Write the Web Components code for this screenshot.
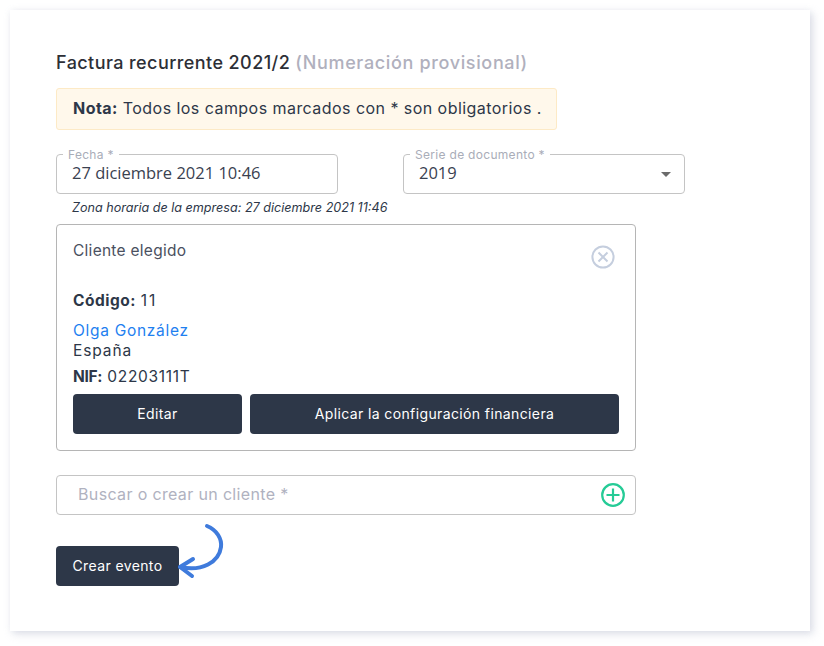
<!DOCTYPE html>
<html lang="es">
<head>
<meta charset="utf-8">
<title>Factura recurrente</title>
<style>
  html,body{margin:0;padding:0;background:#fff}
  body{font-family:Inter,"Liberation Sans",sans-serif;color:#2d3748;width:824px;height:646px;overflow:hidden}
</style>
</head>
<body>
<invoice-page>
  <form-title main="Factura recurrente 2021/2" extra="(Numeración provisional)"></form-title>
  <note-box><b>Nota:</b> Todos los campos marcados con * son obligatorios .</note-box>
  <field-row>
    <outline-field label="Fecha *" value="27 diciembre 2021 10:46"></outline-field>
    <outline-field label="Serie de documento *" value="2019" select></outline-field>
  </field-row>
  <hint-line>Zona horaria de la empresa: 27 diciembre 2021 11:46</hint-line>
  <client-card></client-card>
  <search-field placeholder="Buscar o crear un cliente *"></search-field>
  <event-action></event-action>
</invoice-page>

<script>
// each element keeps its own markup and styles in the shadow root
class InvoicePage extends HTMLElement {
  constructor(){
    super();
    this.attachShadow({mode:'open'});
    this.shadowRoot.innerHTML = `
      <style>
        :host{display:block;box-sizing:border-box;width:800px;height:621px;margin:10px 0 0 10px;padding:41px 46px 0;background:#fff;box-shadow:3px 3px 8px rgba(180,185,205,.45),0 0 6px rgba(210,215,225,.2)}
      </style>
      <slot></slot>
    `;
  }
}
class FieldRow extends HTMLElement {
  constructor(){
    super();
    this.attachShadow({mode:'open'});
    this.shadowRoot.innerHTML = `
      <style>:host{display:flex;gap:65px}</style>
      <slot></slot>
    `;
  }
}
class FormTitle extends HTMLElement {
  constructor(){
    super();
    this.attachShadow({mode:'open'});
    this.shadowRoot.innerHTML = `
      <style>
        :host{display:block;height:24px;line-height:24px;font-size:18px;font-weight:500;color:#2d2f36;white-space:nowrap;letter-spacing:.42px}
        span{color:#b0b0bd;letter-spacing:.65px}
      </style>
      <div id="m"></div>
    `;
  }
  connectedCallback(){
    const el = this.shadowRoot.getElementById('m');
    el.textContent = this.getAttribute('main')+' ';
    const s = document.createElement('span');
    s.textContent = this.getAttribute('extra');
    el.appendChild(s);
  }
}
class NoteBox extends HTMLElement {
  constructor(){
    super();
    this.attachShadow({mode:'open'});
    this.shadowRoot.innerHTML = `
      <style>
        :host{display:block;box-sizing:border-box;width:501px;height:42px;margin:13px 0 24px;padding:0 16px;line-height:38px;font-size:16px;letter-spacing:.45px;color:#2d3748;background:#fff8eb;border:1px solid #fdeac6;border-radius:3px;white-space:nowrap}
        ::slotted(b){font-weight:700}
      </style>
      <slot></slot>
    `;
  }
}
class OutlineField extends HTMLElement {
  constructor(){
    super();
    this.attachShadow({mode:'open'});
    this.shadowRoot.innerHTML = `
      <style>
        :host{display:block;position:relative;box-sizing:border-box;width:282px;height:40px;border:1px solid #c4c4c4;border-radius:4px;background:#fff}
        .val{display:flex;align-items:center;justify-content:space-between;height:35px;padding:0 15px;font-family:"Open Sans",sans-serif;font-size:16.5px;color:#3a4150}
        label{position:absolute;left:6px;top:-7px;padding:0 5px;background:#fff;font-size:12px;line-height:13px;letter-spacing:.3px;color:#a9adb8;white-space:nowrap}
        svg{display:none;margin:3px -2px 0 0}
        :host([select]) svg{display:block}
      </style>
      <label></label>
      <div class="val"><span></span>
        <svg width="10" height="5" viewBox="0 0 10 5"><path d="M0 0h10L5 5z" fill="#6b6b6b"/></svg>
      </div>
    `;
  }
  connectedCallback(){
    this.shadowRoot.querySelector('label').textContent = this.getAttribute('label');
    this.shadowRoot.querySelector('span').textContent = this.getAttribute('value');
  }
}
class HintLine extends HTMLElement {
  constructor(){
    super();
    this.attachShadow({mode:'open'});
    this.shadowRoot.innerHTML = `
      <style>
        :host{display:block;height:16px;margin:6px 0 8px 16px;line-height:16px;font-size:12.6px;font-style:italic;color:#2d3748;white-space:nowrap}
      </style>
      <slot></slot>
    `;
  }
}
class ClientCard extends HTMLElement {
  constructor(){
    super();
    this.attachShadow({mode:'open'});
    this.shadowRoot.innerHTML = `
      <style>
        :host{display:block;box-sizing:border-box;width:580px;height:227px;padding:15px 16px 0;border:1px solid #b5b5b5;border-radius:4px;font-size:15.5px;letter-spacing:.4px;color:#2d3748}
        .head{display:flex;justify-content:space-between;height:41px}
        .head span{line-height:22px;color:#4a5060;letter-spacing:.27px}
        .head svg{margin:5px 4px 0 0}
        .code{margin-top:8px;height:24px;line-height:24px}
        .code span{letter-spacing:2px}
        .name{margin-top:8px;height:20px;line-height:20px;color:#1e80f0;letter-spacing:.7px}
        .land{height:20px;line-height:20px;letter-spacing:.9px}
        .nif{margin-top:6px;height:20px;line-height:20px;letter-spacing:.7px}
        b{font-weight:700}
        .code b{letter-spacing:.5px}
        .nif b{letter-spacing:-.3px}
        .btns{display:flex;gap:8px;margin-top:7px}
        dark-button:first-child{width:169px}
        dark-button:last-child{width:369px}
      </style>
      <div class="head"><span>Cliente elegido</span>
        <svg width="24" height="24" viewBox="0 0 24 24" fill="none" stroke="#c5cede" stroke-width="2"><circle cx="12" cy="12" r="10.6"/><path d="M7.5 7.5l9 9M16.5 7.5l-9 9" stroke-width="2"/></svg>
      </div>
      <div class="code"><b>Código:</b> <span>11</span></div>
      <div class="name">Olga González</div>
      <div class="land">España</div>
      <div class="nif"><b>NIF:</b> 02203111T</div>
      <div class="btns">
        <dark-button>Editar</dark-button>
        <dark-button>Aplicar la configuración financiera</dark-button>
      </div>
    `;
  }
}
class DarkButton extends HTMLElement {
  constructor(){
    super();
    this.attachShadow({mode:'open'});
    this.shadowRoot.innerHTML = `
      <style>
        :host{display:flex;align-items:center;justify-content:center;box-sizing:border-box;height:40px;padding-bottom:2px;background:#2d3748;color:#fff;border-radius:4px;font-size:14px;letter-spacing:.38px;font-weight:400;white-space:nowrap}
      </style>
      <slot></slot>
    `;
  }
}
class SearchField extends HTMLElement {
  constructor(){
    super();
    this.attachShadow({mode:'open'});
    this.shadowRoot.innerHTML = `
      <style>
        :host{display:flex;align-items:center;justify-content:space-between;box-sizing:border-box;width:580px;height:40px;margin-top:24px;padding:0 10px 0 21px;border:1px solid #c4c4c4;border-radius:4px;font-size:16px;letter-spacing:.35px;color:#b0b2bf}
        span{margin-bottom:3px}
      </style>
      <span></span>
      <svg width="24" height="24" viewBox="0 0 24 24" fill="none" stroke="#25cb96" stroke-width="2.2"><circle cx="12" cy="12" r="10.8"/><path d="M12 5.5v13M5.5 12h13"/></svg>
    `;
  }
  connectedCallback(){
    this.shadowRoot.querySelector('span').textContent = this.getAttribute('placeholder');
  }
}
class EventAction extends HTMLElement {
  constructor(){
    super();
    this.attachShadow({mode:'open'});
    this.shadowRoot.innerHTML = `
      <style>
        :host{display:block;position:relative;width:123px;margin-top:31px}
        svg{position:absolute;left:120px;top:-24px}
      </style>
      <dark-button>Crear evento</dark-button>
      <svg width="50" height="60" viewBox="0 0 50 60" fill="none" stroke="#3f7bdc" stroke-width="4" stroke-linecap="round" stroke-linejoin="round">
        <path d="M31 4C41 8 46 17 45 25C43 40 26 50 4 45"/>
        <path d="M17 37L4 45L16 54"/>
      </svg>
    `;
  }
}
customElements.define('invoice-page', InvoicePage);
customElements.define('field-row', FieldRow);
customElements.define('form-title', FormTitle);
customElements.define('note-box', NoteBox);
customElements.define('outline-field', OutlineField);
customElements.define('hint-line', HintLine);
customElements.define('dark-button', DarkButton);
customElements.define('client-card', ClientCard);
customElements.define('search-field', SearchField);
customElements.define('event-action', EventAction);
</script>
</body>
</html>
